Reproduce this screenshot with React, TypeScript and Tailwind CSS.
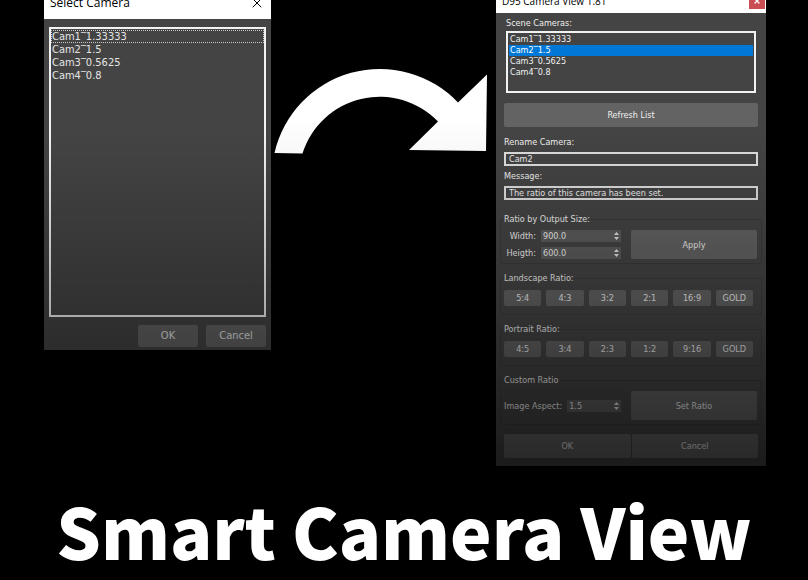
import { useState } from "react";
import { X } from "lucide-react";
import clsx from "clsx";

const cameras = ["Cam1‾1.33333", "Cam2‾1.5", "Cam3‾0.5625", "Cam4‾0.8"];
const landscape = ["5:4", "4:3", "3:2", "2:1", "16:9", "GOLD"];
const portrait = ["4:5", "3:4", "2:3", "1:2", "9:16", "GOLD"];

const button = "rounded-[2px] bg-[#636363] text-center hover:bg-[#6c6c6c]";

function SelectDialog() {
  const [current, setCurrent] = useState(0);

  return (
    <section className="relative -mt-[13px] bg-[#444] text-[11px] text-[#e4e4e4]">
      <header className="flex h-8 items-center justify-between bg-white px-[6px] text-black">
        <h2 className="font-['Open_Sans',sans-serif] text-[12px]">Select Camera</h2>
        <button type="button" aria-label="Close">
          <X className="size-4" strokeWidth={1.5} />
        </button>
      </header>
      <div className="px-[5px] pt-2 pb-[3px]">
        <ul className="h-[290px] border-2 border-[#f2f2f2] pt-px">
          {cameras.map((name, i) => (
            <li key={name}>
              <button
                type="button"
                onClick={() => setCurrent(i)}
                className={clsx("flex h-[13px] w-full items-center border border-dotted text-left leading-[13px]", current === i ? "border-[#c8c8c8]" : "border-transparent")}
              >
                {name}
              </button>
            </li>
          ))}
        </ul>
        <div className="mt-2 flex justify-end gap-2">
          <button type="button" className={clsx(button, "h-[22px] w-[60px]")}>OK</button>
          <button type="button" className={clsx(button, "h-[22px] w-[60px]")}>Cancel</button>
        </div>
      </div>
      <div className="pointer-events-none absolute inset-0 bg-linear-to-b from-transparent from-40% to-black/35" />
    </section>
  );
}

function Arrow() {
  return (
    <svg viewBox="271 0 225 160" className="w-full" aria-hidden="true">
      <defs>
        <linearGradient id="shade" x1="0" y1="0" x2="0" y2="1">
          <stop offset="0.6" stopColor="#fff" />
          <stop offset="1" stopColor="#f8f8f8" />
        </linearGradient>
      </defs>
      <path
        d="M274.500 153A108 108 0 0 1 458 102.500L487 74.500L486 151L409 150L438 121.500A81 81 0 0 0 302.500 153.500Z"
        fill="url(#shade)"
      />
    </svg>
  );
}

function Spin({ id, value }: { id: string; value: string }) {
  return (
    <div className="flex h-3 min-w-0 flex-1 items-center bg-[#5c5c5c] pr-0.5">
      <input id={id} defaultValue={value} inputMode="decimal" className="w-full min-w-0 bg-transparent pl-0.5 outline-none" />
      <svg viewBox="0 0 5 8" className="h-2 w-[5px] shrink-0 fill-[#e4e4e4]" aria-hidden="true">
        <path d="M2.500 0L5 3H0ZM2.500 8L0 5H5Z" />
      </svg>
    </div>
  );
}

function Group({ title, children }: { title: string; children: React.ReactNode }) {
  return (
    <fieldset className="mx-1 min-w-0 rounded-[2px] border border-[#3b3b3b] pr-1 pl-[3px]">
      <legend className="leading-[10px]">{title}</legend>
      {children}
    </fieldset>
  );
}

function Ratios({ values }: { values: string[] }) {
  return (
    <div className="grid grid-cols-6 gap-[5px] pt-[7px] pr-1 pb-2">
      {values.map((v) => (
        <button key={v} type="button" className={clsx(button, "h-4")}>
          {v}
        </button>
      ))}
    </div>
  );
}

function CameraView() {
  const [current, setCurrent] = useState(1);

  return (
    <section className="relative -mt-3 bg-[#444] pb-2 text-[9px] leading-[10px] text-[#f0f0f0]">
      <header className="flex h-[25px] items-center justify-between bg-white pr-px pl-[6px] text-black">
        <h2 className="font-['Open_Sans',sans-serif] text-[10px]">D95 Camera View 1.81</h2>
        <button type="button" aria-label="Close" className="flex h-[17px] w-4 items-center justify-center bg-[#c94f52] text-white">
          <X className="size-2" strokeWidth={4} />
        </button>
      </header>
      <div className="px-[10px] pt-[5px]">
        <p>Scene Cameras:</p>
        <ul className="mt-[3px] h-[62px] border-2 border-[#f2f2f2] px-px pt-px">
          {cameras.map((name, i) => (
            <li key={name}>
              <button
                type="button"
                onClick={() => setCurrent(i)}
                className={clsx("block h-[11px] w-full pl-px text-left leading-[11px]", current === i && "bg-[#0078d7] text-white")}
              >
                {name}
              </button>
            </li>
          ))}
        </ul>
      </div>
      <div className="flex flex-col px-2 pt-[10px]">
        <button type="button" className={clsx(button, "h-6")}>Refresh List</button>
        <label htmlFor="rename" className="mt-[10px]">Rename Camera:</label>
        <input id="rename" defaultValue="Cam2" className="mt-[5px] h-[14px] border-2 border-[#dedede] px-[3px] outline-none" />
        <label htmlFor="message" className="mt-[5px]">Message:</label>
        <input id="message" readOnly value="The ratio of this camera has been set." className="mt-[5px] h-[14px] border-2 border-[#dedede] px-[3px] outline-none" />
      </div>
      <div className="flex flex-col gap-[9px] pt-[14px]">
        <Group title="Ratio by Output Size:">
          <div className="grid grid-cols-[117fr_126fr] gap-[10px] pt-[6px] pb-1">
            <div className="flex flex-col gap-[5px]">
              <div className="flex items-center gap-[5px]">
                <label htmlFor="width" className="w-8 text-right">Width:</label>
                <Spin id="width" value="900.0" />
              </div>
              <div className="flex items-center gap-[5px]">
                <label htmlFor="height" className="w-8 text-right">Heigth:</label>
                <Spin id="height" value="600.0" />
              </div>
            </div>
            <button type="button" className={button}>Apply</button>
          </div>
        </Group>
        <Group title="Landscape Ratio:">
          <Ratios values={landscape} />
        </Group>
        <Group title="Portrait Ratio:">
          <Ratios values={portrait} />
        </Group>
        <Group title="Custom Ratio">
          <div className="grid grid-cols-[117fr_126fr] gap-[10px] pt-[6px] pb-1">
            <div className="flex items-center gap-[5px]">
              <label htmlFor="aspect" className="shrink-0">Image Aspect:</label>
              <Spin id="aspect" value="1.5" />
            </div>
            <button type="button" className={clsx(button, "h-[29px]")}>Set Ratio</button>
          </div>
        </Group>
        <div className="grid grid-cols-2 gap-px px-2">
          <button type="button" className={clsx(button, "h-6")}>OK</button>
          <button type="button" className={clsx(button, "h-6")}>Cancel</button>
        </div>
      </div>
      <div className="pointer-events-none absolute inset-0 bg-linear-to-b from-transparent from-30% via-black/25 via-65% to-black/60" />
    </section>
  );
}

export default function App() {
  return (
    <main className="min-h-screen overflow-hidden bg-black font-['DejaVu_Sans_Condensed','DejaVu_Sans',sans-serif]">
      <div className="grid grid-cols-[227fr_225fr_270fr] items-start pr-[42px] pl-11">
        <SelectDialog />
        <Arrow />
        <CameraView />
      </div>
      <h1 className="pt-4 text-center font-['Noto_Sans_CJK_SC',sans-serif] text-[70px] leading-[95px] font-black whitespace-nowrap text-white">
        Smart Camera View
      </h1>
    </main>
  );
}
